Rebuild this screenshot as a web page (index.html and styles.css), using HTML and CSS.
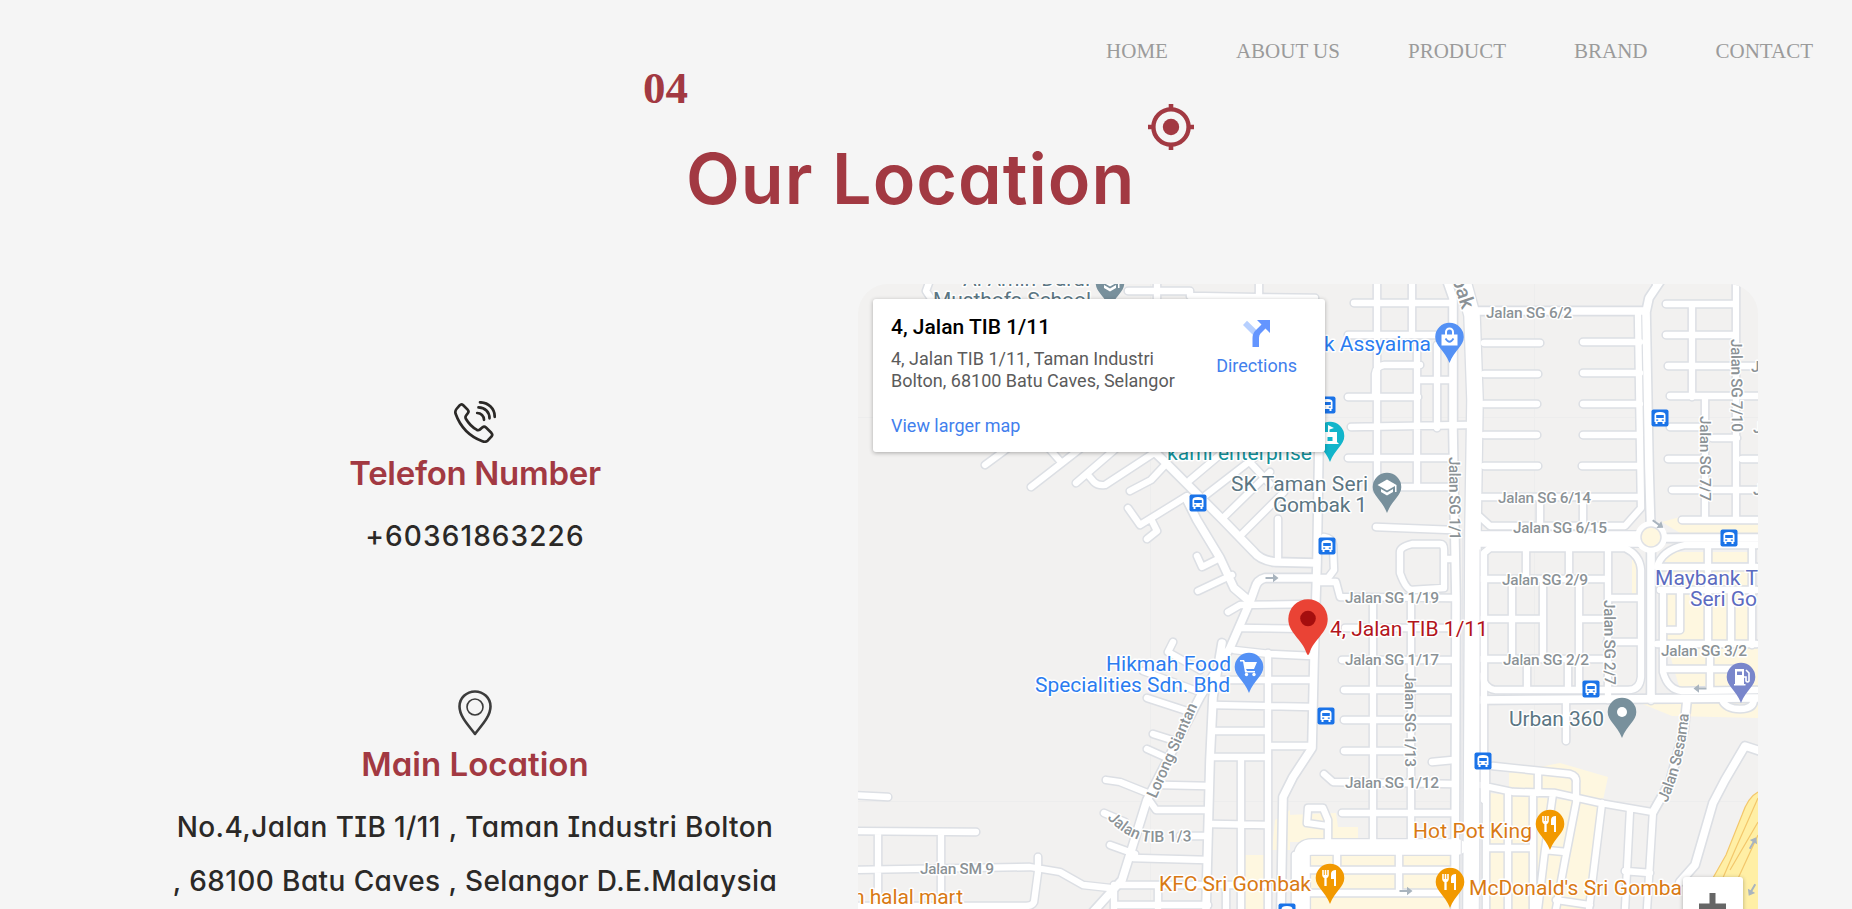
FILE: index.html
```html
<!DOCTYPE html>
<html lang="en">
<head>
<meta charset="utf-8">
<title>Our Location</title>
<link rel="stylesheet" href="styles.css">
</head>
<body>
<header class="header">
  <nav class="nav">
    <a class="nav-link">HOME</a>
    <a class="nav-link">ABOUT US</a>
    <a class="nav-link">PRODUCT</a>
    <a class="nav-link">BRAND</a>
    <a class="nav-link">CONTACT</a>
  </nav>
</header>
<section class="heading">
  <span class="number">04</span>
  <h1 class="title">Our Location</h1>
  <svg class="target" viewBox="0 0 46 46"><circle cx="23" cy="23" r="17.6" fill="none" stroke="#a23942" stroke-width="4.4"/><circle cx="23" cy="23" r="8.2" fill="#a23942"/><path d="M23 0v6M23 40v6M0 23h6M40 23h6" stroke="#a23942" stroke-width="4.6"/></svg>
</section>
<main class="content">
  <div class="contacts">
    <div class="contact contact-phone">
      <svg class="icon-phone" viewBox="0 0 42 42"><g fill="none" stroke="#2b2927" stroke-width="2.7" stroke-linecap="round" stroke-linejoin="round"><path d="M5.6 4.4Q7.3 2.6 9 4L13.6 8.6Q15.3 10.3 13.8 12.3L11.9 14.8Q11 16.4 12 18C14.6 22.4 18.4 26.300 22.600 28.700Q24.400 29.600 25.800 28.600L28.500 26.300Q30.300 25 32 26.600L37.300 31.800Q39 33.700 37.600 35.300L33.600 39.700Q31.500 41.500 28.400 40.300C15.500 35.500 6 25 1.600 12.800Q.8 10 2.500 8Z"/><path d="M26 1.300C34.500 1.500 40.700 7.500 40.700 15.800M24.500 6.400C31 6.500 35.500 11 35.500 17.300M23.200 12C27 12 30 15 30 18.800"/></g></svg>
      <h2 class="contact-title telefon">Telefon Number</h2>
      <p class="contact-text phone">+60361863226</p>
    </div>
    <div class="contact contact-location">
      <svg class="icon-pin" viewBox="0 0 34 46"><g fill="none" stroke="#3c3c3c"><path stroke-width="2.600" stroke-linejoin="round" d="M17 44C12 37 1.500 27 1.500 16.500C1.500 8 8.500 1.500 17 1.500S32.500 8 32.500 16.500C32.500 27 22 37 17 44Z"/><circle cx="17" cy="17" r="8" stroke-width="1.600"/></g></svg>
      <h2 class="contact-title main-location">Main Location</h2>
      <p class="contact-text address">No.4,Jalan TIB 1/11 , Taman Industri Bolton<br>, 68100 Batu Caves , Selangor D.E.Malaysia</p>
    </div>
  </div>
  <div class="map">
    <svg class="map-canvas" viewBox="858 284 900 625">
      <defs>
        <path id="pin" d="M-14.300 0A14.300 14.300 0 1 1 14.300 0C14.300 9 5 13 0 26C-5 13-14.300 9-14.300 0Z"/>
        <g id="bus"><rect x="-8.500" y="-8.500" width="17" height="17" rx="2" fill="#1a73e8"/><path fill="#fff" d="M-5.500-3Q-5.500-6 0-6T5.500-3V4H4.500V6H2.500V4H-2.500V6H-4.500V4H-5.500Z"/><path fill="#1a73e8" d="M-3.800-3H3.800V0H-3.800ZM-3.800 1.500h2v1.300h-2ZM1.800 1.500h2v1.300h-2Z"/></g>
        <g id="food"><use href="#pin" fill="#f29900"/><path fill="none" stroke="#fff" stroke-width="1.600" d="M-7-8V-3Q-7-1-4.500-1T-2-3V-8M-4.500-8V8"/><path fill="#fff" d="M-6.500-3h4v3h-1v8h-2v-8h-1ZM1-4Q1-8 6-8V8H4V1H1Z"/></g>
        <g id="cap"><use href="#pin" fill="#78909c"/><path fill="#fff" d="M-9.500-2 0-7.500 9.500-2V5H8V-1L0 3.500ZM-6 2 0 5.500 6 2V5L0 8.500-6 5Z"/></g>
        <path id="arrow" d="M-6.500-1H1V-4.200L6.500 0 1 4.200V1H-6.500Z"/>
        <g id="small">
          <path d="M930 280 926 291 932 300M1128 291H1190V296L1315 298M1157 280V300M1259 280V300"/>
          <path d="M985 465 1008 448 1020 438M1031 487 1085 445M1046 445 1060 461M1076 483 1120 445M1088 475 1094 482Q1098 486 1105 485L1163 447M1130 491 1151 480 1165 465M1128 508 1140 525 1187 496M1152 521 1157 531 1147 539M1190 480 1228 448M1206 495 1254 458M1223 518 1270 472M1242 534 1284 492M1246 458 1270 484M1278 519V560M1197 556 1202 567 1220 558M1198 591 1232 575"/>
          <path d="M1324 537Q1332 538 1333 545L1334 570 1328 578H1316M1228 612 1240 605 1315 604M1240 628 1315 629M1234 650 1270 654 1312 656M1173 642 1168 652 1200 670M1143 671 1200 692M1147 698 1190 712M1153 734 1172 740M1147 749 1167 758M1106 780 1120 782 1150 794M1104 813 1125 822M1110 845 1135 854"/>
          <path d="M1163 785 1208 786M1149 800 1156 810H1208M1180 836H1208M1133 858 1207 860M1118 885H1265M1115 905H1208M1213 680H1312M1213 705 1312 707M1213 731H1268M1213 757H1268M1268 746H1311M1212 824 1267 825M1241 757V909M1114 885V909M1158 885V909M1226 885V909M1268 653V909"/>
          <path d="M850 795 888 797M850 831 976 832M850 870 1030 867 1060 872 1083 885 1110 888M878 832V900M941 832V900M1038 857V872L1034 902Q1032 906 1026 906H850"/>
          <path d="M1377 280V490M1412 280V335M1354 303H1451M1348 335H1450M1375 395V374Q1376 366 1384 365H1420M1417 345V487M1437 345V428M1418 380H1452M1348 397H1418M1351 427 1466 425M1348 458H1450M1384 487H1448M1376 527 1452 530M1400 552Q1400 547 1412 544H1440Q1444 544 1444 550V588L1412 590Q1406 590 1400 573ZM1446 559H1455"/>
          <path d="M1316 582H1336L1340 597 1453 598M1345 628H1453M1342 660H1453M1344 690H1453M1344 720H1453M1344 751H1412M1432 762 1453 760M1324 774 1333 782 1453 784M1342 813H1453M1373 598V842M1411 598V842"/>
          <path d="M1484 343H1540M1484 374H1538M1484 404H1537M1484 435H1537M1484 466H1538M1583 342H1640M1583 373H1640M1583 404H1640M1583 435H1640M1582 466H1640M1482 497H1640M1540 500V526M1583 500V526M1478 515 1490 526H1625L1641 508 1638 315"/>
          <path d="M1484 800V553L1490 548H1625Q1640 555 1641 570V677Q1640 690 1628 690H1495Q1483 688 1483 675M1482 579H1608M1610 598H1640M1482 619H1543M1583 619H1607M1607 642H1640M1482 659H1608M1526 550V579M1569 550V579M1608 550V700M1512 579V659M1543 579V659M1579 579V690M1527 659V690M1568 659V690"/>
          <path d="M1736 280V520M1692 304V397M1666 304H1733M1666 335H1733M1668 366H1760M1670 396H1760M1670 427H1705M1705 397V520M1712 438H1737M1668 459H1705M1742 459H1760M1672 490H1760M1682 520H1760M1656 280V284"/>
          <path d="M1757 545H1685Q1662 550 1657 567H1757M1708 545V645M1752 550V645M1731 590V645M1660 590H1757M1680 590V630H1668M1657 644H1757M1663 595V672Q1668 690 1682 691L1757 690M1665 669H1740M1710 645V690"/>
          <path d="M1566 700V741M1722 700Q1726 709 1740 709T1754 699M1493 766 1570 774Q1577 776 1576 783V800M1480 785 1513 792 1555 793 1600 803 1652 812M1486 765V909M1508 793V909M1533 793V909M1553 793 1545 850 1538 909M1577 798 1565 860 1556 909M1602 803 1589 909M1630 810 1625 909M1653 812 1647 909M1486 848H1530M1545 850 1566 852M1625 871 1650 873M1556 900 1590 905M1538 775V793"/>
          <path d="M1328 842V820L1323 808H1308L1307 823 1328 826M1337 850V870M1399 850V893M1296 870H1453M1300 893H1453M1295 909V855"/>
        </g>
        <g id="medium">
          <path d="M1140 438 1165 462 1223 520 1254 552Q1260 560 1275 562L1316 563M1187 500 1197 520 1220 558 1234 588 1248 600M1318 578H1265Q1257 580 1255 588L1250 602 1230 648 1200 697 1147 800 1122 880 1093 912M1319 440 1317 563 1314 660 1312 748 1293 777 1283 797 1281 909M1222 643 1213 697 1210 760 1206 909"/>
          <path d="M1445 275 1453 298V430L1456 600 1455 909M1475 311H1646M1661 280 1649 298 1646 312 1649 470 1651 537M1651 537V700M1651 538H1760M1478 700 1757 698M1687 700 1684 730 1670 782 1653 812M1760 751 1745 746 1725 780 1713 803 1695 865 1680 882"/>
        </g>
        <path id="wide" d="M1462 278 1472 315 1475 400 1473 530 1471 912M1475 539H1651M1302 909V856Q1302 847 1312 847H1458"/>
        <path id="tib" d="M1107 818Q1130 843 1155 842L1202 841"/>
        <path id="sesama" d="M1667 803Q1686 758 1689 710"/>
      </defs>
      <rect x="858" y="284" width="900" height="625" fill="#f2f1f0"/>
      <path stroke="#ededed" d="M858 417.500H1758M858 801.500H1758M1150.500 284V909M1534.500 284V909"/>
      <g fill="#fef7e0">
        <path d="M1662 522 1680 517V524H1758V533H1680ZM1667 552H1750V562H1665ZM1665 567H1752V640H1665ZM1668 648H1758V690H1680ZM1632 560H1636V595H1632ZM1640 703 1758 698V718L1672 716Z"/>
        <path d="M1509 773 1560 763 1608 777 1603 800 1550 790 1509 787ZM1488 793 1600 803 1588 909H1488ZM1287 815 1336 813 1338 827H1358V842H1287ZM1300 853H1450V909H1300ZM1275 820 1290 810V850H1272ZM1243 855H1265V909H1238Z"/>
      </g>
      <path d="M1758 792Q1748 797 1742 815L1726 855 1705 892V909H1758Z" fill="#ffefa5"/>
      <path fill="none" stroke="#f3c76b" stroke-width="1.200" d="M1758 792Q1748 797 1742 815L1726 855 1705 892M1758 798 1735 850 1722 880M1758 822 1730 870M1758 835 1735 885"/>
      <g fill="none" stroke-linecap="round" stroke-linejoin="round">
        <g stroke="#dcdfe4"><use href="#small" stroke-width="9.300"/><use href="#medium" stroke-width="10.800"/><use href="#wide" stroke-width="18.200"/></g>
        <g stroke="#fff"><use href="#small" stroke-width="6.300"/><use href="#medium" stroke-width="7.600"/><use href="#wide" stroke-width="15.500"/></g>
        <path d="M1463 530 1461 909M1480 550V909" stroke="#e6e7eb" stroke-width="1.300"/>
      </g>
      <circle cx="1651" cy="537" r="16" fill="#fff"/><circle cx="1651" cy="537" r="10" fill="#fef7e0" stroke="#dfe1e6" stroke-width="1.500"/>
      <g fill="#a9b4be"><use href="#arrow" x="1272" y="578"/><use href="#arrow" transform="translate(1658 524) rotate(35)"/><use href="#arrow" transform="translate(1700 688.500) rotate(180)"/><use href="#arrow" x="1406" y="891"/><use href="#arrow" transform="translate(1753 843) rotate(-60)"/><use href="#arrow" transform="translate(1752 890) rotate(120)"/></g>

      <g class="road-label">
        <text x="1486" y="318" textLength="86">Jalan SG 6/2</text>
        <text x="1498" y="503" textLength="93">Jalan SG 6/14</text>
        <text x="1513" y="533" textLength="94">Jalan SG 6/15</text>
        <text x="1502" y="585" textLength="86">Jalan SG 2/9</text>
        <text x="1503" y="665" textLength="86">Jalan SG 2/2</text>
        <text x="1661" y="656" textLength="86">Jalan SG 3/2</text>
        <text x="1345" y="603" textLength="94">Jalan SG 1/19</text>
        <text x="1345" y="665" textLength="94">Jalan SG 1/17</text>
        <text x="1345" y="788" textLength="94">Jalan SG 1/12</text>
        <text x="920" y="874" textLength="74">Jalan SM 9</text>
        <text x="1751" y="372">J</text><text x="1753" y="433">J</text><text x="1753" y="495">J</text>
        <text transform="translate(1731 339) rotate(89.500)" textLength="93">Jalan SG 7/10</text>
        <text transform="translate(1700 416) rotate(90)" textLength="85">Jalan SG 7/7</text>
        <text transform="translate(1449 457) rotate(89.500)" textLength="83">Jalan SG 1/1</text>
        <text transform="translate(1604 600) rotate(89.500)" textLength="85">Jalan SG 2/7</text>
        <text transform="translate(1405 673) rotate(90)" textLength="94">Jalan SG 1/13</text>
        <text transform="translate(1156 799) rotate(-66)" textLength="102">Lorong Siantan</text>
        <text><textPath href="#tib" textLength="92">Jalan TIB 1/3</textPath></text>
        <text><textPath href="#sesama" textLength="92">Jalan Sesama</textPath></text>
        <text class="bak" transform="translate(1452 279) rotate(72)">bak</text>
      </g>

      <use href="#bus" x="1660" y="418"/><use href="#bus" x="1327" y="405"/><use href="#bus" x="1198" y="503"/><use href="#bus" x="1327" y="546"/><use href="#bus" x="1729" y="538"/><use href="#bus" x="1591" y="689"/><use href="#bus" x="1326" y="716"/><use href="#bus" x="1483" y="761"/><use href="#bus" x="1287" y="912"/>
      <use href="#cap" x="1110" y="283"/><use href="#cap" x="1387" y="487"/>
      <g transform="translate(1449.500 337)"><use href="#pin" fill="#5491f5"/><path fill="#fff" d="M-8-2.500H8V8.500H-8Z"/><path fill="none" stroke="#fff" stroke-width="2" d="M-3.500-2V-5A3.500 3.500 0 0 1 3.500-5V-2"/><path fill="none" stroke="#5491f5" stroke-width="1.800" d="M-4 1.500Q0 8 4 1.500"/></g>
      <g transform="translate(1330 436)"><use href="#pin" fill="#12b5cb"/><path fill="#fff" d="M-7-4H-2V-11L4-8-.500-6.500V-4H7V6L9 8H-9L-7 6Z"/><rect x="-2.500" y="1" width="5" height="4" fill="#12b5cb"/></g>
      <g transform="translate(1249 667)"><use href="#pin" fill="#5491f5"/><path fill="#fff" d="M-9-7h4l1 2H8L5 2H-3L-2 4H6v1.500H-4L-6-5.500H-9Z"/><circle cx="-2.500" cy="7.500" r="1.700" fill="#fff"/><circle cx="5" cy="7.500" r="1.700" fill="#fff"/></g>
      <g transform="translate(1741 677)"><use href="#pin" fill="#7986cb"/><path fill="#fff" d="M-6-8H3V7H4.500V8.500H-7V7H-6Z"/><path fill="#7986cb" d="M-4-5.500H1V-2H-4Z"/><path fill="none" stroke="#fff" stroke-width="1.600" d="M3 0H5V4Q6.500 6 8 4V-4L5-7"/></g>
      <g transform="translate(1622 712)"><use href="#pin" fill="#78909c"/><circle r="5" fill="#fff"/></g>
      <use href="#food" x="1550" y="824"/><use href="#food" x="1330" y="878"/><use href="#food" x="1450" y="882"/>
      <path fill="#ea4335" d="M1288.300 619A19.700 19.700 0 0 1 1327.700 619C1327.700 633 1314 639 1309.500 653Q1308 657 1306.500 653C1302 639 1288.300 633 1288.300 619Z"/><circle cx="1308" cy="618.500" r="7.800" fill="#a50e0e"/>

      <g class="place-label">
        <g fill="#5b7683"><text x="963" y="286" textLength="127">Al-Amin Darul</text><text x="933" y="307" textLength="158">Musthofa School</text><text x="1231" y="491" textLength="137">SK Taman Seri</text><text x="1273" y="512" textLength="94">Gombak 1</text><text x="1509" y="726" textLength="95">Urban 360</text></g>
        <g fill="#2b7cf0"><text x="1324" y="351" textLength="107">k Assyaima</text><text x="1106" y="671" textLength="125">Hikmah Food</text><text x="1035" y="692" textLength="195">Specialities Sdn. Bhd</text></g>
        <text x="1167" y="460" textLength="145" fill="#129099">kami enterprise</text>
        <text x="1330" y="636" textLength="158" fill="#b3151c">4, Jalan TIB 1/11</text>
        <g fill="#5c6bc0"><text x="1655" y="585" textLength="103">Maybank T</text><text x="1690" y="606" textLength="67">Seri Go</text></g>
        <g fill="#d97a14"><text x="1413" y="838" textLength="119">Hot Pot King</text><text x="1159" y="891" textLength="152">KFC Sri Gombak</text><text x="1469" y="895" textLength="213">McDonald's Sri Gomba</text><text x="853" y="904" textLength="110">n halal mart</text></g>
      </g>
    </svg>
    <div class="map-card">
      <div class="place">
        <div class="place-name">4, Jalan TIB 1/11</div>
        <div class="place-address">4, Jalan TIB 1/11, Taman Industri<br>Bolton, 68100 Batu Caves, Selangor</div>
        <a class="place-link">View larger map</a>
      </div>
      <div class="directions">
        <svg class="directions-icon" viewBox="0 0 27 27"><path fill="#b7d0ff" d="M0 5 4 .800 14 10.500 10.500 15.500Z"/><path fill="#6495ff" d="M9.500 27V18Q9.500 13.500 12.500 10.500L18.500 4.500 14 0H27V13L22.500 8.500 17.500 13.500Q16 15 16 18V27Z"/></svg>
        <span>Directions</span>
      </div>
    </div>
    <div class="zoom-in"><svg viewBox="0 0 27 27" class="zoom-icon"><path d="M13.500 0V27M0 13.500H27" stroke="#666" stroke-width="6"/></svg></div>
  </div>
</main>
</body>
</html>
```
FILE: styles.css
```css
* { box-sizing: border-box; }
html, body { height: 100%; overflow: hidden; }
body {
  margin: 0;
  background: #f5f5f5;
  font-family: Inter, "Liberation Sans", sans-serif;
  font-feature-settings: "cv11", "cv08";
}
h1, h2, p { margin: 0; }

.header { height: 64px; padding: 39px 39px 0 0; }
.nav { display: flex; justify-content: flex-end; gap: 68px; }
.nav-link {
  color: #9b9b9b;
  font: 21px/24px "Liberation Serif", serif;
}

.heading {
  display: grid;
  grid-template-columns: 43px 461px 46px;
  grid-template-rows: 40px 180px;
  margin-left: 643px;
}
.number {
  color: #a23942;
  font: bold 45px/48px "Liberation Serif", serif;
}
.title {
  grid-area: 2 / 2;
  padding-top: 33px;
  color: #a23942;
  font-size: 70px;
  line-height: 84px;
  font-weight: 600;
  letter-spacing: 1px;
  white-space: nowrap;
}
.target { grid-area: 2 / 3; width: 46px; height: 46px; margin-left: 1px; }

.content { display: grid; grid-template-columns: 766px 900px; padding-left: 92px; }
.contacts { display: flex; flex-direction: column; padding-top: 117px; }
.contact { display: flex; flex-direction: column; align-items: center; text-align: center; }
.contact-phone { height: 289px; }
.icon-phone { width: 42px; height: 42px; }
.icon-pin { width: 34px; height: 46px; }
.contact-title {
  color: #a23942;
  font-size: 33px;
  line-height: 40px;
  font-weight: 600;
  white-space: nowrap;
}
.telefon { margin-top: 10px; letter-spacing: -.3px; }
.main-location { margin-top: 8px; }
.contact-text {
  margin-top: 16px;
  color: #2b2927;
  font-size: 28px;
  line-height: 54px;
  font-weight: 500;
  white-space: nowrap;
}
.phone { letter-spacing: 1.100px; }
.address { letter-spacing: .400px; }

.map { position: relative; height: 625px; overflow: hidden; border-radius: 30px 30px 0 0; }
.map-canvas { display: block; width: 900px; height: 625px; }
.road-label {
  font: 500 15.500px Roboto, sans-serif;
  fill: #8b9296;
  stroke: #fff;
  stroke-width: 3px;
  stroke-linejoin: round;
  paint-order: stroke;
}
.bak { font-size: 20px; }
.place-label {
  font: 400 21px Roboto, sans-serif;
  stroke: #fff;
  stroke-width: 3px;
  stroke-linejoin: round;
  paint-order: stroke;
}
.map-card {
  position: absolute;
  left: 15px;
  top: 15px;
  display: flex;
  justify-content: space-between;
  width: 452px;
  height: 153px;
  padding: 15px 28px 0 18px;
  border-radius: 3px;
  background: #fff;
  box-shadow: 0 1px 4px rgba(0, 0, 0, .3);
  font: 18px/22px Roboto, sans-serif;
}
.place-name { font-size: 21px; line-height: 26px; font-weight: 500; color: #000; }
.place-address { margin-top: 8px; line-height: 22px; color: #5b5b5b; }
.place-link { display: block; margin-top: 23px; color: #427fed; }
.directions { display: flex; flex-direction: column; align-items: center; gap: 8px; padding-top: 6px; color: #427fed; }
.directions-icon { width: 27px; height: 27px; }
.zoom-in {
  position: absolute;
  left: 825px;
  top: 593px;
  width: 60px;
  height: 60px;
  padding: 16px;
  border-radius: 3px;
  background: #fff;
  box-shadow: 0 1px 4px rgba(0, 0, 0, .3);
}
.zoom-icon { display: block; width: 27px; height: 27px; }
```
